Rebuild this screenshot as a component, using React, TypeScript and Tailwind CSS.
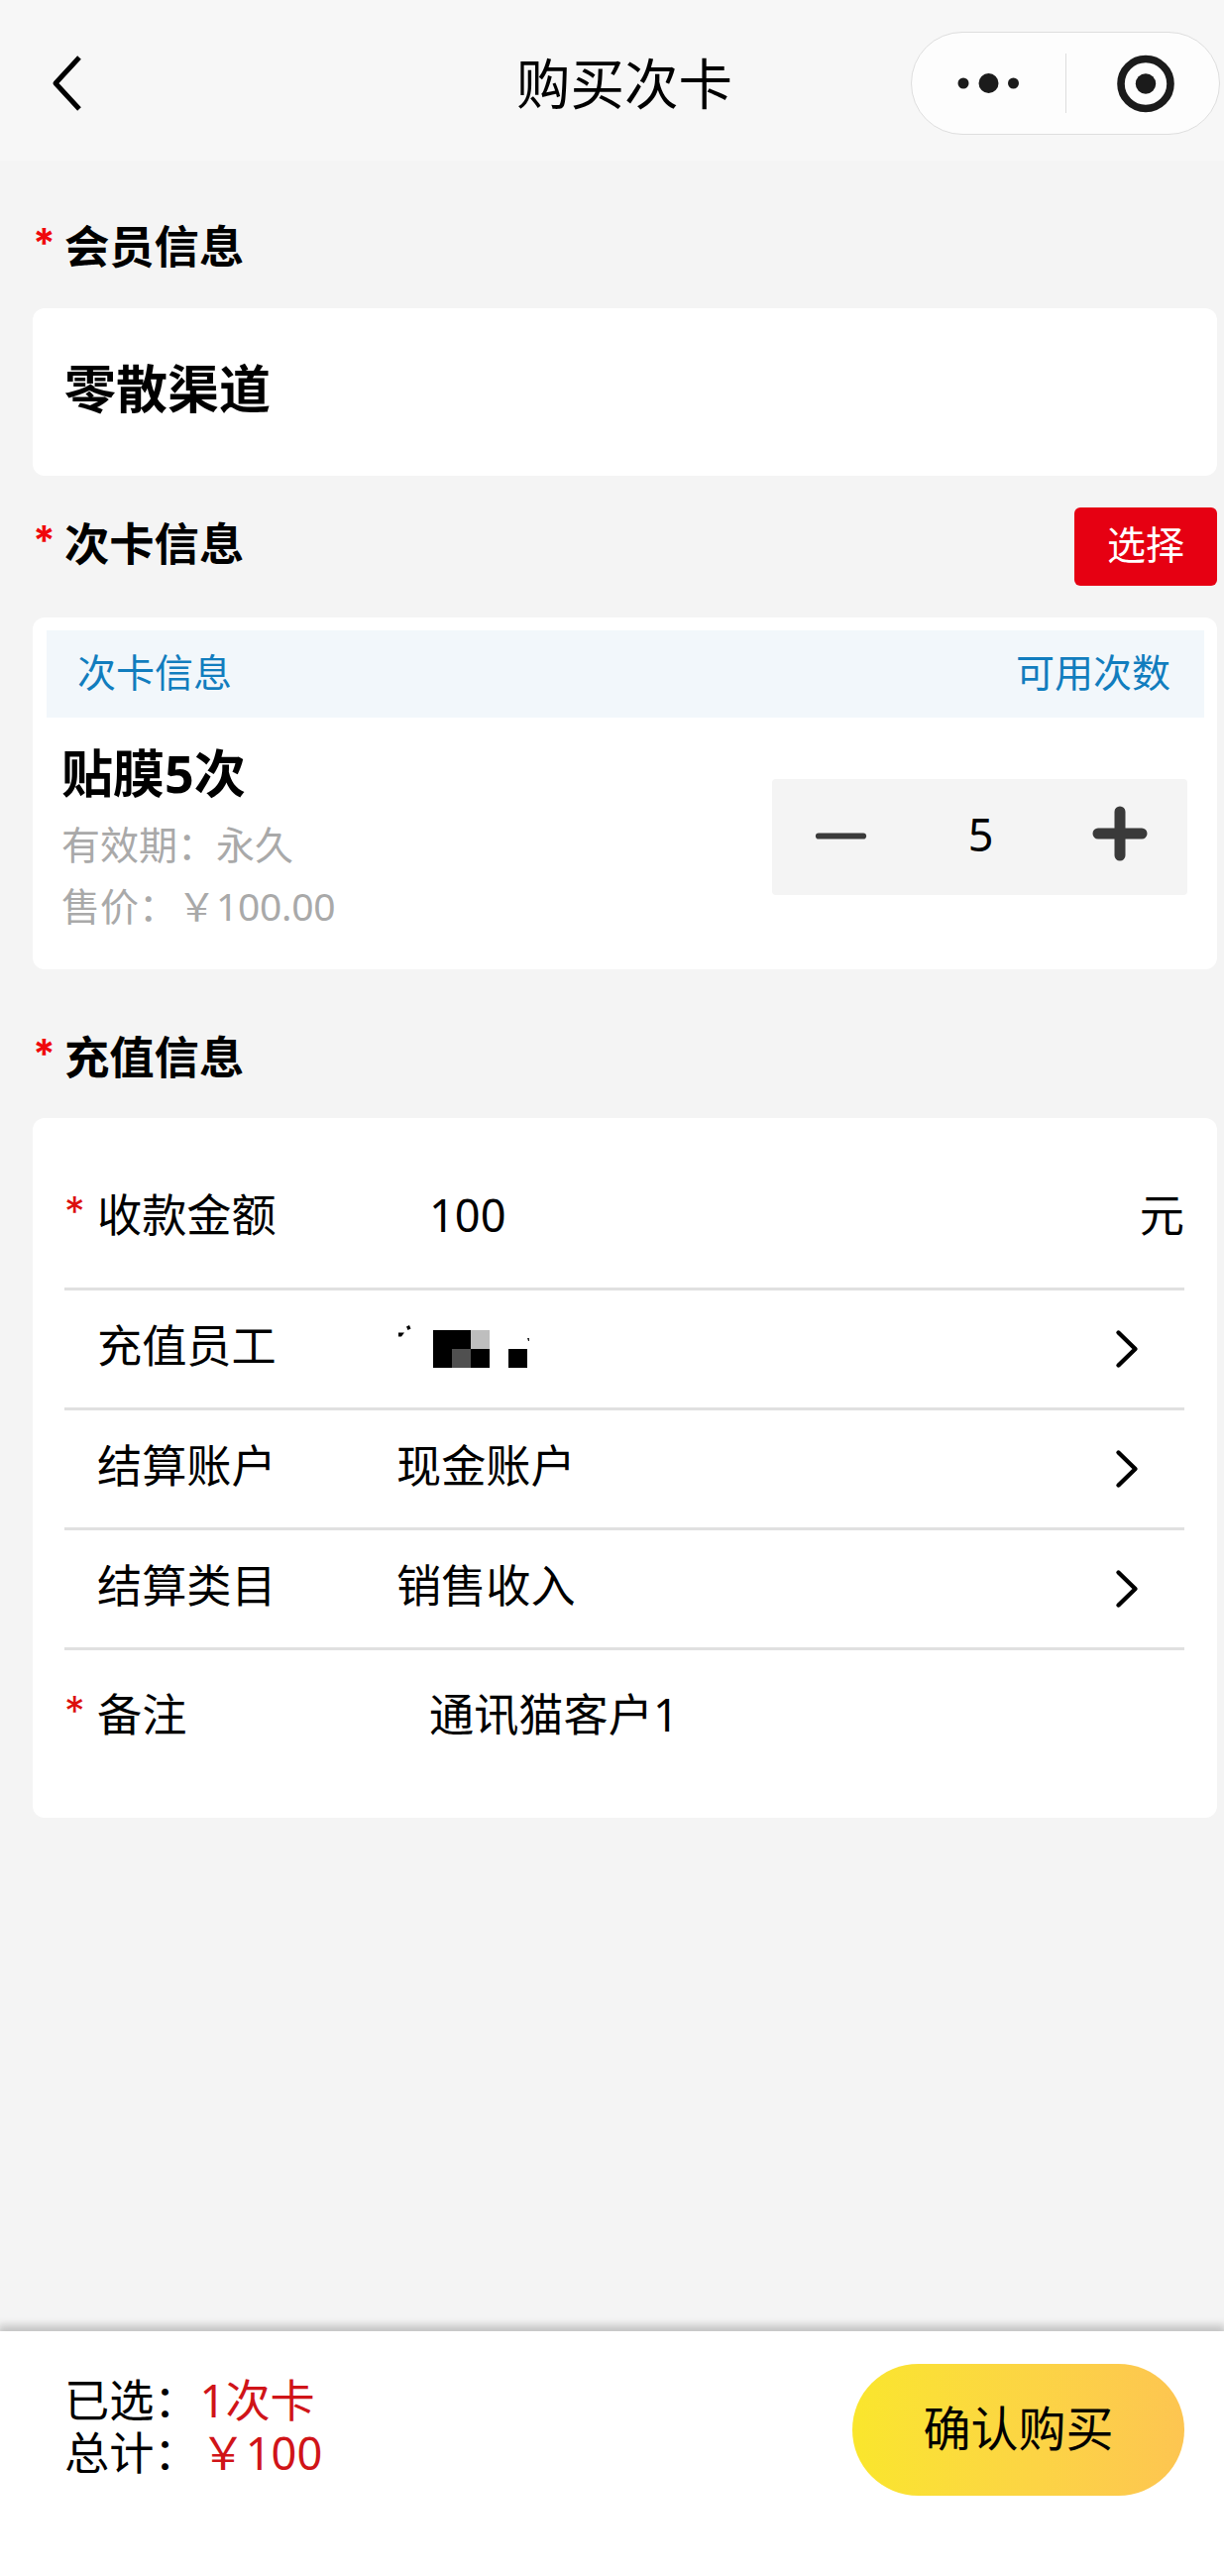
import React, { ReactNode } from 'react';

// ============================================
// Buy punch card page
// ============================================

interface FormRow {
  label: string;
  value: ReactNode;
}

function SectionTitle({ children }: { children: ReactNode }) {
  return (
    <h2 className="flex text-[45.3px] leading-12 font-bold">
      <span className="w-8 shrink-0 font-[Inter,sans-serif] text-[41px] leading-10 text-[#f0080c]">*</span>
      {children}
    </h2>
  );
}

function Required() {
  return <span className="w-[33px] shrink-0 font-[Inter,sans-serif] text-[41px] leading-10 text-[#dc100c]">*</span>;
}

function Chevron() {
  return (
    <svg className="h-10 w-6" viewBox="0 0 24 40" fill="none" stroke="#000" strokeWidth="4.4" strokeLinecap="round" strokeLinejoin="round">
      <path d="M3.5 3.5 20.5 20 3.5 36.5" />
    </svg>
  );
}

// Pixelated staff name
function MaskedName() {
  return (
    <svg className="h-12 w-[140px]" viewBox="0 0 140 48">
      <path d="M2 10.5h6L5 14.5H2zM10 4.5l3-1.5 1.500 3.500-3 1.500z" fill="#000" />
      <g shapeRendering="crispEdges">
        <path d="M37 8h38v19h19v19H37z" fill="#000" />
        <rect x="56" y="27" width="19" height="19" fill="#505050" />
        <rect x="75" y="8" width="19" height="19" fill="#bebebe" />
        <rect x="113" y="27" width="19" height="19" fill="#000" />
      </g>
      <path d="M132 16h2v3h-1z" fill="#222" />
    </svg>
  );
}

const rows: FormRow[] = [
  { label: '充值员工', value: <MaskedName /> },
  { label: '结算账户', value: '现金账户' },
  { label: '结算类目', value: '销售收入' },
];

function Header() {
  return (
    <header className="flex h-[162px] items-start justify-between bg-[#f7f7f7] pt-8 pr-1 pl-[50px]">
      <svg className="mt-[22px] h-[60px] w-9" viewBox="0 0 36 60" fill="none" stroke="#000" strokeWidth="5" strokeLinejoin="round">
        <path d="M30 4 6 30 30 56" />
      </svg>
      <h1 className="mt-6 ml-[255px] text-[54.5px] leading-[56px]">购买次卡</h1>
      <div className="flex h-[104px] w-[312px] items-center rounded-full border border-[#dedede] bg-[#fdfdfd]">
        <svg className="ml-px h-6 w-[154px]" viewBox="0 0 154 24" fill="#1b1b1b">
          <circle cx="51" cy="12" r="5.5" />
          <circle cx="76.5" cy="12" r="10" />
          <circle cx="101.5" cy="12" r="5.5" />
        </svg>
        <div className="h-[60px] w-px bg-[#dedede]" />
        <svg className="ml-[50px] h-[60px] w-[60px]" viewBox="0 0 60 60" fill="none">
          <circle cx="30" cy="30.5" r="25" stroke="#1b1b1b" strokeWidth="7.6" />
          <circle cx="30" cy="30.5" r="10.2" fill="#1b1b1b" />
        </svg>
      </div>
    </header>
  );
}

function Stepper() {
  return (
    <div className="mt-[62px] mr-[17px] flex h-[117px] w-[419px] items-center rounded bg-[#f4f4f4]">
      <svg className="mt-[-3px] ml-[42px] h-14 w-14 shrink-0" viewBox="0 0 56 56" stroke="#3a3a3a" strokeLinecap="round">
        <path d="M5 28.5h45" strokeWidth="6.2" />
      </svg>
      <span className="mt-[-6px] flex-1 text-center text-[45px] leading-12">5</span>
      <svg className="mt-[-7px] mr-10 h-14 w-14 shrink-0" viewBox="0 0 56 56" stroke="#3a3a3a" strokeWidth="11" strokeLinecap="round">
        <path d="M6 28h44M28 6v44" />
      </svg>
    </div>
  );
}

export default function App() {
  return (
    <div className="flex h-[2599px] w-[1235px] flex-col bg-[#f4f4f4] font-['Noto_Sans','Noto_Sans_CJK_SC',sans-serif] text-black">
      <Header />

      <main className="flex-1 pr-[7px] pl-[33px]">
        {/* Member */}
        <div className="pt-[63px] pb-[38px]">
          <SectionTitle>会员信息</SectionTitle>
        </div>
        <div className="h-[169px] rounded-xl bg-white pt-[55px] pl-8 text-[52px] leading-[52px] font-bold">零散渠道</div>

        {/* Card */}
        <div className="flex items-start justify-between pt-8 pb-8">
          <div className="pt-[13px]">
            <SectionTitle>次卡信息</SectionTitle>
          </div>
          <button className="h-[79px] w-36 rounded-md bg-[#e60012] pb-1.5 text-[39px] leading-10 text-white">选择</button>
        </div>
        <div className="h-[355px] rounded-xl bg-white pt-[13px] pr-[13px] pl-3.5">
          <div className="flex h-[88px] items-center justify-between bg-[#f2f7fb] pr-[34px] pb-1 pl-[31px] text-[39px] leading-12 text-[#117dbe]">
            <span>次卡信息</span>
            <span>可用次数</span>
          </div>
          <div className="flex justify-between pl-[15px]">
            <div className="pt-[30px]">
              <div className="text-[52px] leading-[52px] font-bold">贴膜5次</div>
              <div className="mt-[15px] text-[39px] leading-[62px] text-[#a9a9a9]">
                <div>有效期：永久</div>
                <div>
                  售价：￥<span className="tracking-[-0.3px]">100.00</span>
                </div>
              </div>
            </div>
            <Stepper />
          </div>
        </div>

        {/* Recharge */}
        <div className="pt-[65px] pb-[37px]">
          <SectionTitle>充值信息</SectionTitle>
        </div>
        <div className="h-[706px] rounded-xl bg-white pr-[33px] pl-8 text-[45.2px] leading-12">
          <div className="flex h-[174px] border-b-3 border-[#e0e0e0] pt-[74px]">
            <Required />
            <span className="w-[335px]">收款金额</span>
            <span className="flex-1">100</span>
            <span>元</span>
          </div>
          {rows.map((row) => (
            <div key={row.label} className="flex h-[121px] items-center border-b-3 border-[#e0e0e0] pr-[46px] pl-[33px]">
              <span className="mt-[-6px] w-[302px]">{row.label}</span>
              <span className="mt-[-6px] flex-1">{row.value}</span>
              <Chevron />
            </div>
          ))}
          <div className="flex pt-[41px]">
            <Required />
            <span className="w-[335px]">备注</span>
            <span>通讯猫客户1</span>
          </div>
        </div>
      </main>

      <footer className="flex h-[247px] justify-between bg-white pr-10 pl-[65px] shadow-[0_-4px_8px_2px_rgba(0,0,0,0.2)]">
        <div className="pt-[43px] text-[45.2px] leading-[53px]">
          <div className="flex">
            <span>已选：</span>
            <span className="pl-px text-[#d01418]">1次卡</span>
          </div>
          <div className="flex">
            <span>总计：</span>
            <span className="pl-0.5 text-[#d01418]">￥100</span>
          </div>
        </div>
        <button className="mt-[33px] h-[133px] w-[335px] rounded-full bg-linear-to-r from-[#fae62c] to-[#fdc551] pb-1 text-[48px]">确认购买</button>
      </footer>
    </div>
  );
}
